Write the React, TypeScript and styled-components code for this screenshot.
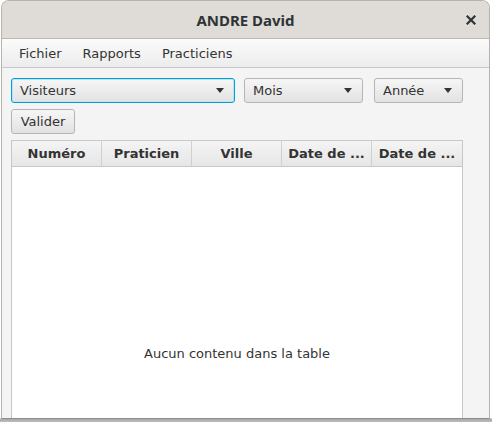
import React from "react";
import styled, { createGlobalStyle } from "styled-components";

const Global = createGlobalStyle`
  html, body { margin: 0; padding: 0; }
  body {
    width: 492px; height: 422px; overflow: hidden;
    background: #9a9a9a;
    font-family: "DejaVu Sans", "Liberation Sans", sans-serif;
  }
  #root { width: 492px; height: 422px; }
`;

const Desktop = styled.div`
  width: 492px;
  height: 422px;
  background: linear-gradient(#ffffff, #ffffff 418px, #a8a8a8 419px, #bdbdbd);
  padding: 0 1px 0 1px;
  box-sizing: border-box;
  display: flex;
  flex-direction: column;
`;

const Win = styled.div`
  width: 489px;
  height: 419px;
  display: flex;
  flex-direction: column;
  border-radius: 8px 8px 0 0;
  border: 1px solid #b6b3ae;
  border-bottom: 1px solid #8e8e8e;
  box-sizing: border-box;
  overflow: hidden;
  background: #f4f4f4;
`;

const TitleBar = styled.div`
  height: 37px;
  flex: none;
  background: #dfdcd8;
  border-bottom: 1px solid #bfb8b1;
  display: flex;
  align-items: center;
  justify-content: center;
  position: relative;
  font-family: "Noto Sans", "Open Sans", sans-serif;
  font-weight: bold;
  font-size: 15px;
  color: #2e3436;
`;

const Close = styled.div`
  position: absolute;
  right: 11px;
  top: 12px;
  width: 14px;
  height: 14px;
  display: flex;
  align-items: center;
  justify-content: center;
`;

const MenuBar = styled.div`
  height: 28px;
  flex: none;
  background: linear-gradient(#fbfbfb, #ececec);
  border-bottom: 1px solid #c8c8c8;
  display: flex;
  align-items: center;
  padding-left: 9px;
`;

const MenuItem = styled.div`
  font-size: 13px;
  color: #333333;
  padding: 0 8px;
  margin-right: 5px;
`;

const Content = styled.div`
  flex: 1;
  padding: 10px 26px 0 9px;
  display: flex;
  flex-direction: column;
  gap: 6px;
  min-height: 0;
`;

const Row = styled.div`
  display: flex;
  align-items: center;
`;

const Combo = styled.div<{ $w: number; $focus?: boolean; $ml?: number }>`
  width: ${(p) => p.$w}px;
  height: 25px;
  box-sizing: border-box;
  margin-left: ${(p) => p.$ml ?? 0}px;
  border-radius: 3px;
  border: 1px solid ${(p) => (p.$focus ? "#039ed3" : "#b5b5b5")};
  box-shadow: ${(p) => (p.$focus ? "inset 0 0 0 1px #bde4f3" : "none")};
  background: linear-gradient(#f6f6f6, #e2e2e2);
  display: flex;
  align-items: center;
  padding: 0 10px 0 8px;
  font-size: 13px;
  color: #333333;
  justify-content: space-between;
`;

const Arrow = styled.div`
  width: 0;
  height: 0;
  border-left: 4px solid transparent;
  border-right: 4px solid transparent;
  border-top: 5px solid #333333;
`;

const Button = styled.div`
  width: 64px;
  height: 25px;
  box-sizing: border-box;
  border-radius: 3px;
  border: 1px solid #b5b5b5;
  background: linear-gradient(#f6f6f6, #e2e2e2);
  font-size: 13px;
  color: #333333;
  display: flex;
  align-items: center;
  justify-content: center;
`;

const Table = styled.div`
  flex: 1;
  width: 452px;
  box-sizing: border-box;
  border: 1px solid #c8c8c8;
  border-bottom: none;
  background: #ffffff;
  display: flex;
  flex-direction: column;
`;

const Header = styled.div`
  height: 25px;
  flex: none;
  display: grid;
  grid-template-columns: 90px 90px 90px 90px 1fr;
  background: linear-gradient(#f4f4f4, #e6e6e6);
  border-bottom: 1px solid #c8c8c8;
`;

const HeaderCell = styled.div<{ $last?: boolean }>`
  display: flex;
  align-items: center;
  justify-content: center;
  font-size: 13px;
  font-weight: bold;
  color: #333333;
  border-right: ${(p) => (p.$last ? "none" : "1px solid #d0d0d0")};
  white-space: nowrap;
  overflow: hidden;
`;

const Body = styled.div`
  flex: 1;
  display: flex;
  align-items: center;
  justify-content: center;
  font-size: 13px;
  color: #333333;
  padding-top: 121px;
`;

export default function App() {
  return (
    <>
      <Global />
      <Desktop>
        <Win>
          <TitleBar>
            ANDRE David
            <Close>
              <svg width="10" height="10" viewBox="0 0 10 10">
                <path d="M1.5 1.5 L8.5 8.5 M8.5 1.5 L1.5 8.5" stroke="#2e3436" strokeWidth="2.2" strokeLinecap="square" />
              </svg>
            </Close>
          </TitleBar>
          <MenuBar>
            <MenuItem>Fichier</MenuItem>
            <MenuItem>Rapports</MenuItem>
            <MenuItem>Practiciens</MenuItem>
          </MenuBar>
          <Content>
            <Row>
              <Combo $w={224} $focus>
                Visiteurs
                <Arrow />
              </Combo>
              <Combo $w={119} $ml={9}>
                Mois
                <Arrow />
              </Combo>
              <Combo $w={89} $ml={11}>
                Année
                <Arrow />
              </Combo>
            </Row>
            <Row>
              <Button>Valider</Button>
            </Row>
            <Table>
              <Header>
                <HeaderCell>Numéro</HeaderCell>
                <HeaderCell>Praticien</HeaderCell>
                <HeaderCell>Ville</HeaderCell>
                <HeaderCell>Date de ...</HeaderCell>
                <HeaderCell $last>Date de ...</HeaderCell>
              </Header>
              <Body>Aucun contenu dans la table</Body>
            </Table>
          </Content>
        </Win>
      </Desktop>
    </>
  );
}
